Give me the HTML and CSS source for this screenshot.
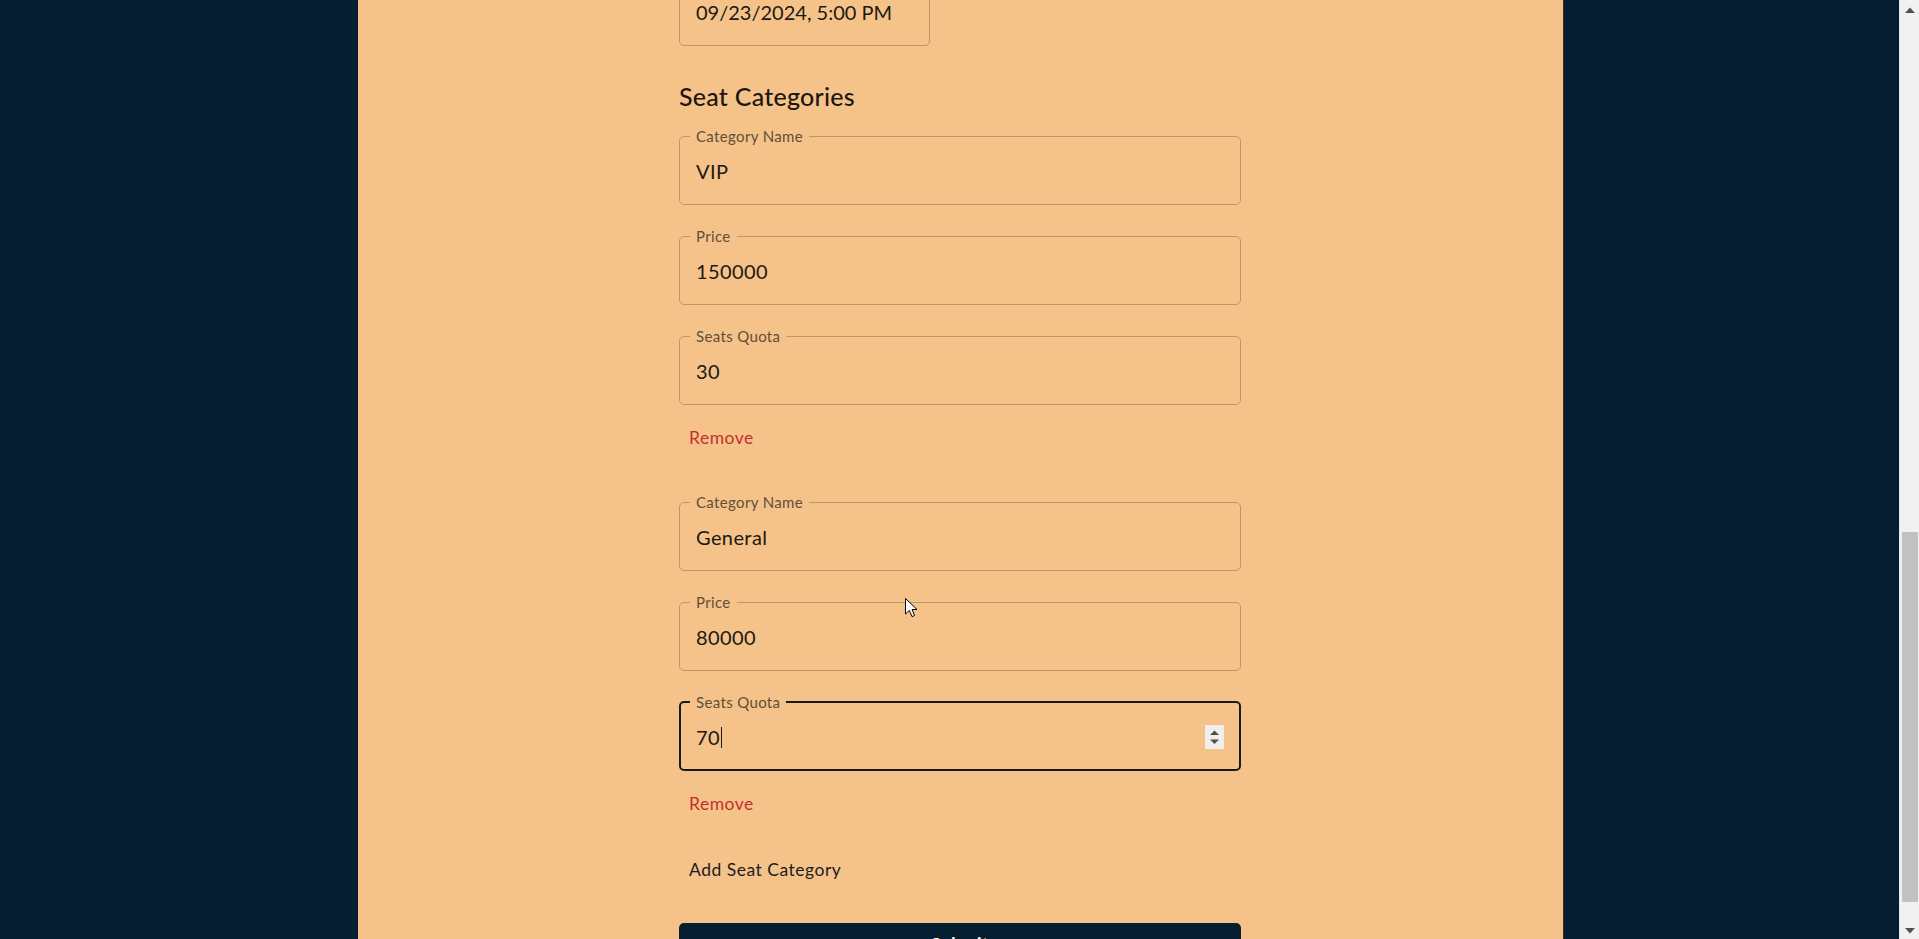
FILE: index.html
```html
<!DOCTYPE html>
<html lang="en">
<head>
<meta charset="utf-8">
<title>Create Event</title>
<link rel="stylesheet" href="styles.css">
</head>
<body>
<div class="page">
  <main class="panel">
    <form class="form">
      <fieldset class="field field-date">
        <legend>Event Date &amp; Time</legend>
        <div class="value">09/23/2024, 5:00 PM</div>
      </fieldset>

      <h2 class="section-title">Seat Categories</h2>

      <div class="category">
        <fieldset class="field">
          <legend>Category Name</legend>
          <div class="value">VIP</div>
        </fieldset>
        <fieldset class="field">
          <legend>Price</legend>
          <div class="value">150000</div>
        </fieldset>
        <fieldset class="field">
          <legend>Seats Quota</legend>
          <div class="value">30</div>
        </fieldset>
        <button type="button" class="text-btn danger">Remove</button>
      </div>

      <div class="category">
        <fieldset class="field">
          <legend>Category Name</legend>
          <div class="value">General</div>
        </fieldset>
        <fieldset class="field">
          <legend>Price</legend>
          <div class="value">80000</div>
        </fieldset>
        <fieldset class="field focused">
          <legend>Seats Quota</legend>
          <div class="value value-row">
            <span>70</span><span class="caret"></span>
            <span class="spinner">
              <svg width="19" height="24" viewBox="0 0 19 24"><polygon points="5,10 9.5,5.5 14,10" fill="#4f4f4f"/><polygon points="5,14.5 14,14.5 9.5,19" fill="#4f4f4f"/></svg>
            </span>
          </div>
        </fieldset>
        <button type="button" class="text-btn danger">Remove</button>
      </div>

      <button type="button" class="text-btn add">Add Seat Category</button>
      <button type="submit" class="submit">Submit</button>
    </form>
  </main>
  <div class="spacer"></div>
  <div class="scrollbar">
    <div class="sb-arrow">
      <svg width="10" height="6" viewBox="0 0 10 6"><polygon points="0,6 5,0.5 10,6" fill="#505050"/></svg>
    </div>
    <div class="sb-thumb"></div>
    <div class="sb-arrow sb-down">
      <svg width="10" height="6" viewBox="0 0 10 6"><polygon points="0,0 10,0 5,5.5" fill="#505050"/></svg>
    </div>
  </div>
</div>
<svg class="cursor" width="13" height="20" viewBox="0 0 13 20"><path d="M0.5 0.5 L0.5 16 L4.3 12.4 L7 18.6 L9.6 17.5 L7 11.5 L12 11.5 Z" fill="#ffffff" stroke="#000000" stroke-width="1" stroke-linejoin="round"/></svg>
</body>
</html>
```

FILE: styles.css
```css
html, body {
  margin: 0;
  padding: 0;
  height: 100%;
  overflow: hidden;
}

body {
  font-family: Lato, "Noto Sans", sans-serif;
  background: #061f30;
  color: #201912;
}

.page {
  display: flex;
  height: 939px;
  background: #061f30;
}

.panel {
  margin-left: 358px;
  width: 884px;
  padding-left: 321px;
  background: #f5c38a;
  border-right: 1px solid #3b3326;
  flex: none;
}

.spacer {
  flex: 1;
}

.form {
  width: 562px;
  display: flex;
  flex-direction: column;
  align-items: flex-start;
  margin-top: -32px;
}

.field {
  box-sizing: border-box;
  width: 562px;
  margin: 0;
  padding: 0 16px;
  border: 1px solid #bd966a;
  border-radius: 5px;
  min-width: 0;
}

.field legend {
  font-size: 15px;
  line-height: 18px;
  letter-spacing: 0.35px;
  color: #624e37;
  padding: 0 6px;
  margin-left: -6px;
}

.field + .field {
  margin-top: 22px;
}

.field-date {
  width: 251px;
}

.value {
  font-size: 20px;
  line-height: 24px;
  letter-spacing: 0.4px;
  padding: 14px 0 21px;
  color: #201912;
}

.field-date .value {
  letter-spacing: 0;
}

.focused {
  border: 2px solid #1b1a18;
  padding: 0 15px;
}

.focused .value {
  padding: 14px 0 20px;
}

.value-row {
  display: flex;
  align-items: center;
}

.caret {
  display: inline-block;
  width: 1.5px;
  height: 21px;
  background: #201912;
  margin-left: 0.5px;
}

.spinner {
  margin-left: auto;
  width: 19px;
  height: 24px;
  background: #f1efec;
  display: flex;
}

.section-title {
  margin: 30px 0 11px;
  font-size: 25px;
  line-height: 40px;
  font-weight: 500;
  letter-spacing: 0.25px;
  color: #1d1711;
}

.category {
  display: flex;
  flex-direction: column;
  align-items: flex-start;
}

.category + .category {
  margin-top: 32px;
}

.text-btn {
  font-family: Lato, "Noto Sans", sans-serif;
  font-size: 17.5px;
  line-height: 30px;
  letter-spacing: 0.5px;
  padding: 8px 10px;
  border: none;
  background: transparent;
  border-radius: 5px;
  margin-top: 10px;
  cursor: pointer;
}

.danger {
  color: #c3302b;
}

.add {
  margin-top: 20px;
  color: #1b1c1e;
}

.submit {
  margin-top: 30px;
  width: 562px;
  height: 54px;
  padding: 6px 20px;
  border: none;
  border-radius: 5px;
  background: #061f30;
  color: #ffffff;
  font-family: Lato, "Noto Sans", sans-serif;
  font-size: 17.5px;
  line-height: 30px;
  letter-spacing: 0.5px;
  font-weight: 700;
  display: flex;
  justify-content: center;
  align-items: flex-start;
}

.scrollbar {
  width: 19px;
  flex: none;
  background: #f1f1f2;
  border-left: 1px solid #e6e6e8;
  display: flex;
  flex-direction: column;
  align-items: center;
}

.sb-arrow {
  height: 19px;
  display: flex;
  align-items: center;
  justify-content: center;
}

.sb-thumb {
  margin-top: 513px;
  width: 16px;
  height: 370px;
  background: #c1c1c1;
}

.sb-down {
  margin-top: auto;
  height: 17px;
}

.cursor {
  position: fixed;
  left: 905px;
  top: 598px;
}
```
